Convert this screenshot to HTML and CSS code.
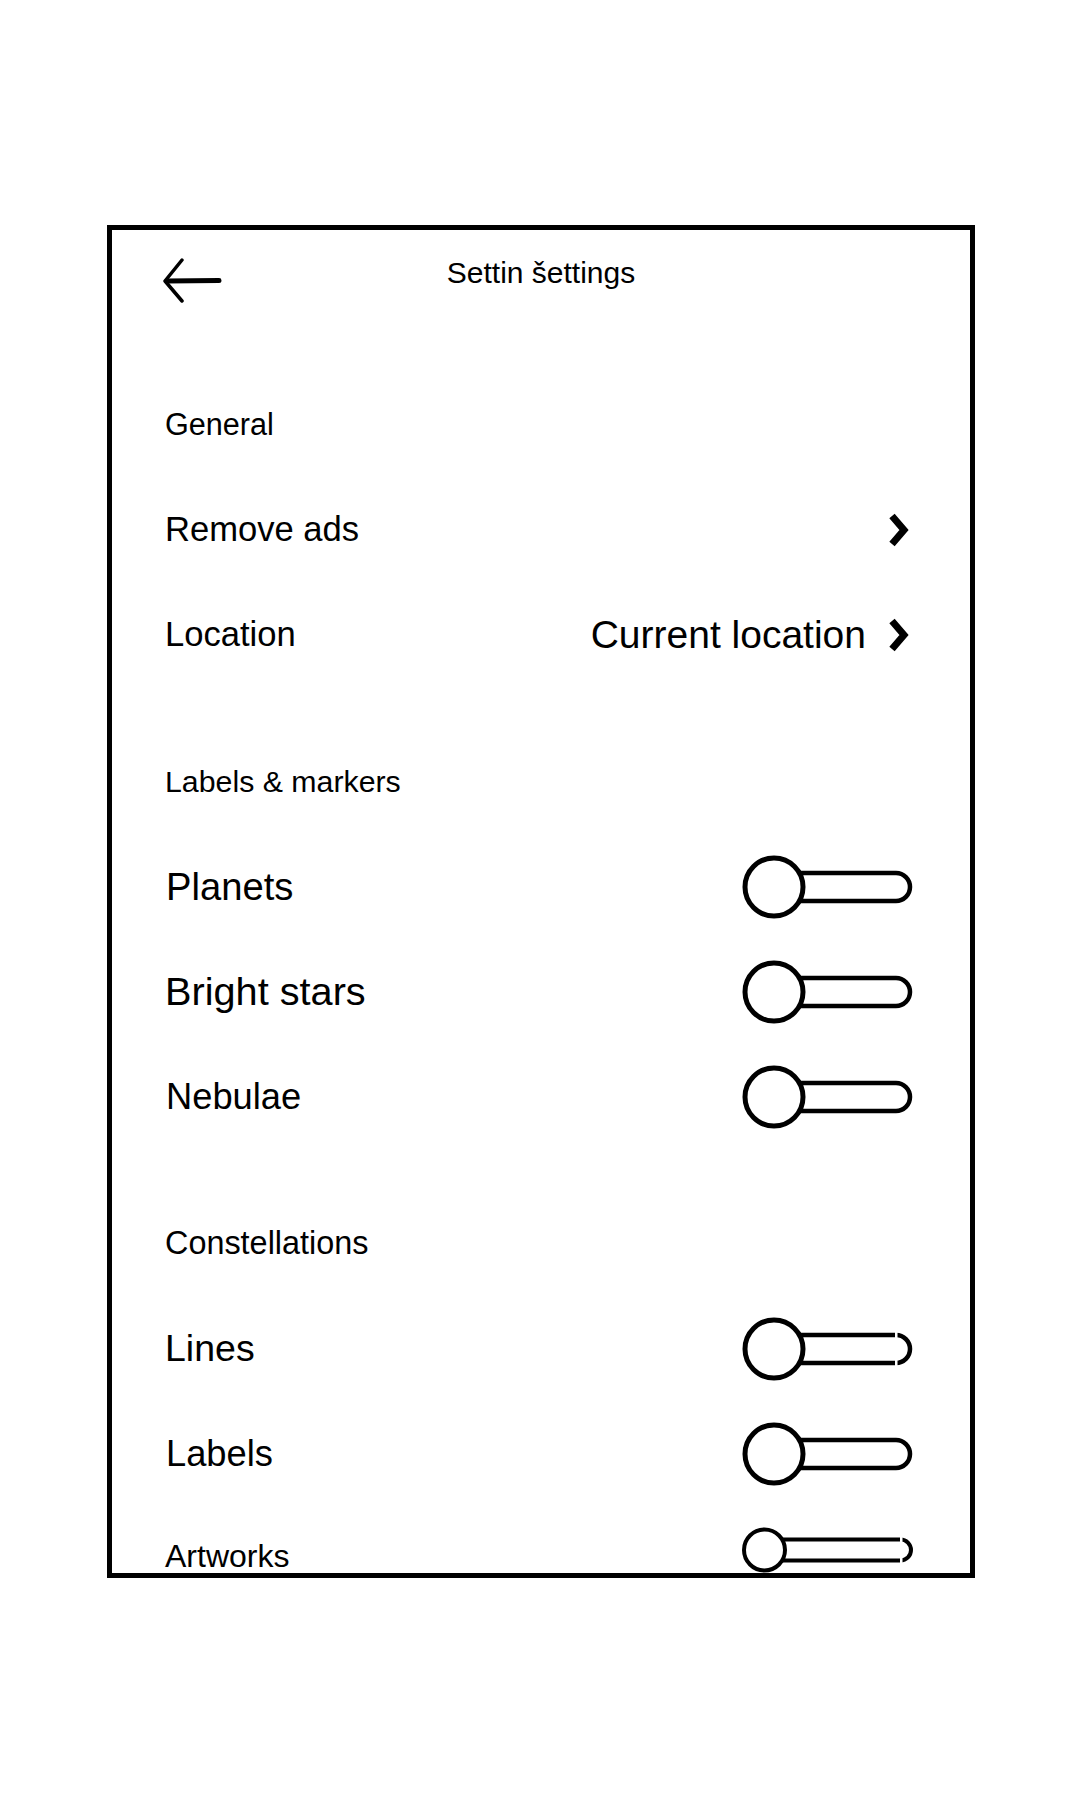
FILE: index.html
```html
<!DOCTYPE html>
<html lang="en">
<head>
<meta charset="utf-8">
<title>Settings</title>
<link rel="stylesheet" href="styles.css">
</head>
<body>
<div class="page">
  <div class="frame">
    <header class="topbar">
      <span class="back">
        <svg width="60" height="60" viewBox="0 0 60 60">
          <line x1="5" y1="38" x2="57" y2="37.5" stroke="#000" stroke-width="5" stroke-linecap="round"/>
          <polyline points="20,17 3,38 20,58" fill="none" stroke="#000" stroke-width="3.5" stroke-linecap="round" stroke-linejoin="round"/>
        </svg>
      </span>
      <h1 class="title">Settin šettings</h1>
      <span></span>
    </header>

    <section class="group group--first">
      <div class="row"><h2 class="group-title group-title--general">General</h2></div>
      <div class="row">
        <span class="label">Remove ads</span>
        <svg class="chev" width="26" height="36" viewBox="0 0 26 36"><polyline points="6,4 18,18 6,32" fill="none" stroke="#000" stroke-width="7" stroke-linejoin="miter"/></svg>
      </div>
      <div class="row">
        <span class="label">Location</span>
        <span class="value">
          <span class="value-text">Current location</span>
          <svg class="chev" width="26" height="36" viewBox="0 0 26 36"><polyline points="6,4 18,18 6,32" fill="none" stroke="#000" stroke-width="7" stroke-linejoin="miter"/></svg>
        </span>
      </div>
    </section>

    <section class="group">
      <div class="row"><h2 class="group-title">Labels &amp; markers</h2></div>
      <div class="row">
        <span class="label label--38 label--inset">Planets</span>
        <svg class="toggle" width="172" height="66" viewBox="0 0 172 66"><rect x="32" y="19" width="136" height="28" rx="14" fill="none" stroke="#000" stroke-width="4.5"/><circle cx="32" cy="33" r="29" fill="#fff" stroke="#000" stroke-width="5"/></svg>
      </div>
      <div class="row">
        <span class="label label--40">Bright stars</span>
        <svg class="toggle" width="172" height="66" viewBox="0 0 172 66"><rect x="32" y="19" width="136" height="28" rx="14" fill="none" stroke="#000" stroke-width="4.5"/><circle cx="32" cy="33" r="29" fill="#fff" stroke="#000" stroke-width="5"/></svg>
      </div>
      <div class="row">
        <span class="label label--36 label--inset">Nebulae</span>
        <svg class="toggle" width="172" height="66" viewBox="0 0 172 66"><rect x="32" y="19" width="136" height="28" rx="14" fill="none" stroke="#000" stroke-width="4.5"/><circle cx="32" cy="33" r="29" fill="#fff" stroke="#000" stroke-width="5"/></svg>
      </div>
    </section>

    <section class="group">
      <div class="row"><h2 class="group-title group-title--32">Constellations</h2></div>
      <div class="row">
        <span class="label label--37">Lines</span>
        <svg class="toggle" width="172" height="66" viewBox="0 0 172 66"><rect x="32" y="19" width="136" height="28" rx="14" fill="none" stroke="#000" stroke-width="4.5"/><rect x="153" y="14" width="2.5" height="38" fill="#fff"/><circle cx="32" cy="33" r="29" fill="#fff" stroke="#000" stroke-width="5"/></svg>
      </div>
      <div class="row">
        <span class="label label--36 label--inset">Labels</span>
        <svg class="toggle" width="172" height="66" viewBox="0 0 172 66"><rect x="32" y="19" width="136" height="28" rx="14" fill="none" stroke="#000" stroke-width="4.5"/><circle cx="32" cy="33" r="29" fill="#fff" stroke="#000" stroke-width="5"/></svg>
      </div>
      <div class="row row--last">
        <span class="label label--32">Artworks</span>
        <svg class="toggle toggle--small" width="172" height="50" viewBox="0 0 172 50"><rect x="22" y="14.5" width="147" height="21" rx="10.5" fill="none" stroke="#000" stroke-width="4"/><rect x="158" y="10" width="2.5" height="30" fill="#fff"/><circle cx="22.5" cy="25" r="20.5" fill="#fff" stroke="#000" stroke-width="4"/></svg>
      </div>
    </section>
  </div>
</div>
</body>
</html>
```

FILE: styles.css
```css
* {
  box-sizing: border-box;
  margin: 0;
  padding: 0;
}

body {
  margin: 0;
  background: #fff;
  color: #000;
  font-family: "Liberation Sans", Arial, Helvetica, sans-serif;
}

.page {
  padding: 225px 0 0 107px;
}

.frame {
  width: 868px;
  height: 1353px;
  border: 5px solid #000;
  overflow: hidden;
  background: #fff;
}

.topbar {
  height: 86px;
  display: grid;
  grid-template-columns: 1fr auto 1fr;
  align-items: center;
}

.back {
  display: flex;
  padding-left: 50px;
}

.title {
  font-size: 30px;
  font-weight: normal;
  line-height: 1.15;
  white-space: nowrap;
}

.group {
  display: flex;
  flex-direction: column;
  margin-top: 42px;
}

.group--first {
  margin-top: 56.5px;
}

.row {
  height: 105px;
  flex: 0 0 105px;
  display: flex;
  align-items: center;
  justify-content: space-between;
  padding: 0 56px 0 53px;
}

.group-title {
  font-size: 30.3px;
  font-weight: normal;
  line-height: 1.15;
}

.group-title--general {
  font-size: 30.6px;
}

.group-title--32 {
  font-size: 32.4px;
}

.label {
  font-size: 34.6px;
  line-height: 1.15;
}

.label--inset {
  margin-left: 1px;
}

.label--32 { font-size: 32px; }
.label--36 { font-size: 36.3px; }
.label--37 { font-size: 37.5px; }
.label--38 { font-size: 38.2px; }
.label--40 { font-size: 39.7px; }

.value {
  display: flex;
  align-items: center;
  gap: 20px;
}

.value-text {
  font-size: 39px;
  line-height: 1.15;
}

.chev {
  display: block;
  margin-right: 2px;
}

.toggle {
  display: block;
}

.row--last .label {
  margin-bottom: 6px;
}

.row--last .toggle {
  margin-bottom: 18px;
}
```
